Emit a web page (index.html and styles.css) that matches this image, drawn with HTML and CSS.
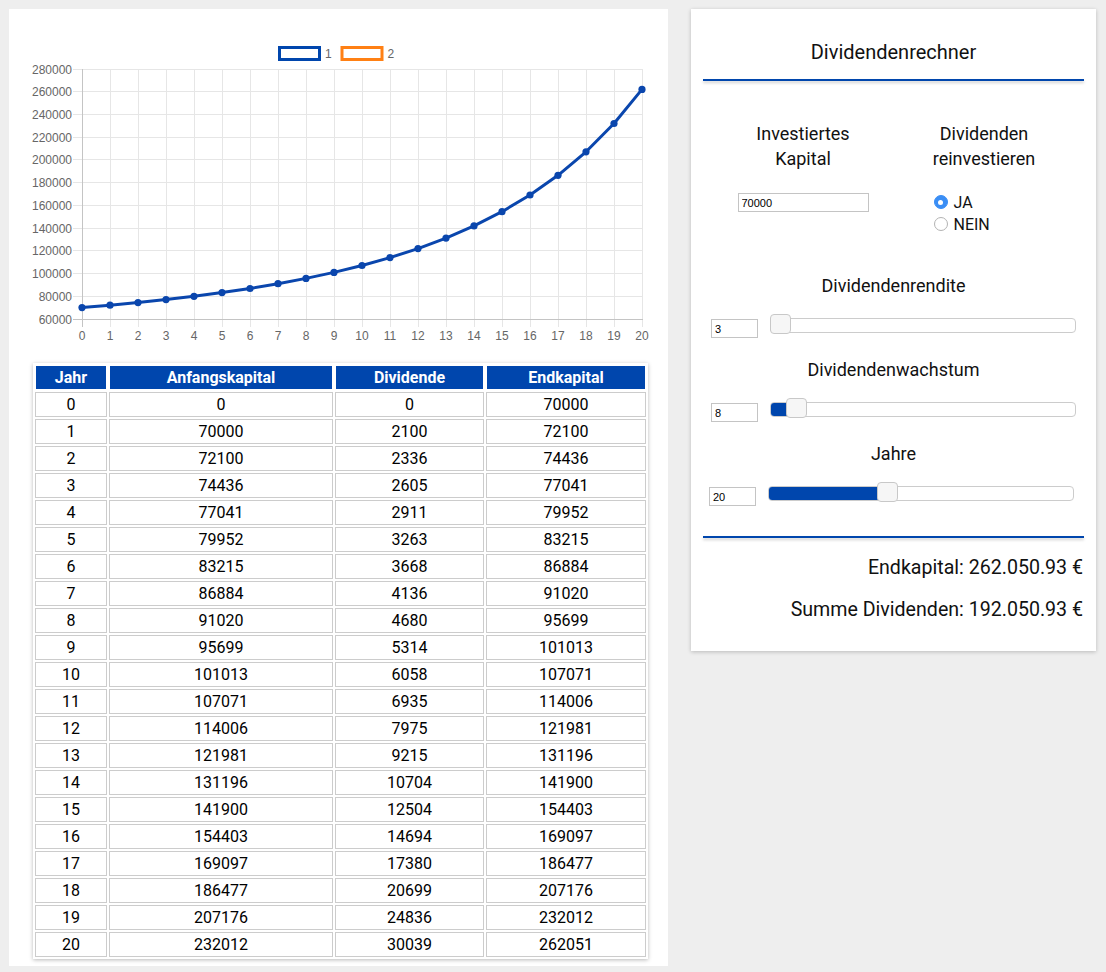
FILE: index.html
```html
<!DOCTYPE html>
<html lang="de">
<head>
<meta charset="utf-8">
<title>Dividendenrechner</title>
<link rel="stylesheet" href="styles.css">
</head>
<body>
<div class="page">
  <section class="card results-card">
    <svg class="chart" width="659" height="354" viewBox="9 9 659 354" xmlns="http://www.w3.org/2000/svg">
      <g class="legend">
        <rect x="279.5" y="47.5" width="40" height="12" fill="#fff" stroke="#0046ad" stroke-width="3"/>
        <text x="325" y="57.5">1</text>
        <rect x="342" y="47.5" width="40" height="12" fill="#fff" stroke="#ff8014" stroke-width="3"/>
        <text x="387.5" y="57.5">2</text>
      </g>
      <g class="grid" stroke="#e6e6e6" stroke-width="1">
        <line x1="73" y1="69.5" x2="643" y2="69.5"/>
        <line x1="73" y1="91.5" x2="643" y2="91.5"/>
        <line x1="73" y1="114.5" x2="643" y2="114.5"/>
        <line x1="73" y1="137.5" x2="643" y2="137.5"/>
        <line x1="73" y1="159.5" x2="643" y2="159.5"/>
        <line x1="73" y1="182.5" x2="643" y2="182.5"/>
        <line x1="73" y1="205.5" x2="643" y2="205.5"/>
        <line x1="73" y1="228.5" x2="643" y2="228.5"/>
        <line x1="73" y1="250.5" x2="643" y2="250.5"/>
        <line x1="73" y1="273.5" x2="643" y2="273.5"/>
        <line x1="73" y1="296.5" x2="643" y2="296.5"/>
        <line x1="110.5" y1="69" x2="110.5" y2="327"/>
        <line x1="138.5" y1="69" x2="138.5" y2="327"/>
        <line x1="166.5" y1="69" x2="166.5" y2="327"/>
        <line x1="194.5" y1="69" x2="194.5" y2="327"/>
        <line x1="222.5" y1="69" x2="222.5" y2="327"/>
        <line x1="250.5" y1="69" x2="250.5" y2="327"/>
        <line x1="278.5" y1="69" x2="278.5" y2="327"/>
        <line x1="306.5" y1="69" x2="306.5" y2="327"/>
        <line x1="334.5" y1="69" x2="334.5" y2="327"/>
        <line x1="362.5" y1="69" x2="362.5" y2="327"/>
        <line x1="390.5" y1="69" x2="390.5" y2="327"/>
        <line x1="418.5" y1="69" x2="418.5" y2="327"/>
        <line x1="446.5" y1="69" x2="446.5" y2="327"/>
        <line x1="474.5" y1="69" x2="474.5" y2="327"/>
        <line x1="502.5" y1="69" x2="502.5" y2="327"/>
        <line x1="530.5" y1="69" x2="530.5" y2="327"/>
        <line x1="558.5" y1="69" x2="558.5" y2="327"/>
        <line x1="586.5" y1="69" x2="586.5" y2="327"/>
        <line x1="614.5" y1="69" x2="614.5" y2="327"/>
        <line x1="642.5" y1="69" x2="642.5" y2="327"/>
      </g>
      <g class="axes" stroke="#c4c4c4" stroke-width="1">
        <line x1="73" y1="319.5" x2="643" y2="319.5"/>
        <line x1="82.5" y1="69" x2="82.5" y2="327"/>
      </g>
      <g class="ylabels" text-anchor="end">
        <text x="72" y="73.5">280000</text>
        <text x="72" y="95.5">260000</text>
        <text x="72" y="118.5">240000</text>
        <text x="72" y="141.5">220000</text>
        <text x="72" y="163.5">200000</text>
        <text x="72" y="186.5">180000</text>
        <text x="72" y="209.5">160000</text>
        <text x="72" y="232.5">140000</text>
        <text x="72" y="254.5">120000</text>
        <text x="72" y="277.5">100000</text>
        <text x="72" y="300.5">80000</text>
        <text x="72" y="323.5">60000</text>
      </g>
      <g class="xlabels" text-anchor="middle">
        <text x="82" y="340">0</text>
        <text x="110" y="340">1</text>
        <text x="138" y="340">2</text>
        <text x="166" y="340">3</text>
        <text x="194" y="340">4</text>
        <text x="222" y="340">5</text>
        <text x="250" y="340">6</text>
        <text x="278" y="340">7</text>
        <text x="306" y="340">8</text>
        <text x="334" y="340">9</text>
        <text x="362" y="340">10</text>
        <text x="390" y="340">11</text>
        <text x="418" y="340">12</text>
        <text x="446" y="340">13</text>
        <text x="474" y="340">14</text>
        <text x="502" y="340">15</text>
        <text x="530" y="340">16</text>
        <text x="558" y="340">17</text>
        <text x="586" y="340">18</text>
        <text x="614" y="340">19</text>
        <text x="642" y="340">20</text>
      </g>
      <polyline class="series" fill="none" stroke="#0a46ad" stroke-width="3" stroke-linejoin="round" stroke-linecap="round"
        points="82,307.6 110,305.2 138,302.6 166,299.6 194,296.3 222,292.6 250,288.5 278,283.7 306,278.4 334,272.4 362,265.5 390,257.6 418,248.6 446,238.1 474,225.9 502,211.7 530,195 558,175.3 586,151.8 614,123.5 642,89.4"/>
      <g class="points" fill="#0a46ad">
        <circle cx="82" cy="307.6" r="3.6"/>
        <circle cx="110" cy="305.2" r="3.6"/>
        <circle cx="138" cy="302.6" r="3.6"/>
        <circle cx="166" cy="299.6" r="3.6"/>
        <circle cx="194" cy="296.3" r="3.6"/>
        <circle cx="222" cy="292.6" r="3.6"/>
        <circle cx="250" cy="288.5" r="3.6"/>
        <circle cx="278" cy="283.7" r="3.6"/>
        <circle cx="306" cy="278.4" r="3.6"/>
        <circle cx="334" cy="272.4" r="3.6"/>
        <circle cx="362" cy="265.5" r="3.6"/>
        <circle cx="390" cy="257.6" r="3.6"/>
        <circle cx="418" cy="248.6" r="3.6"/>
        <circle cx="446" cy="238.1" r="3.6"/>
        <circle cx="474" cy="225.9" r="3.6"/>
        <circle cx="502" cy="211.7" r="3.6"/>
        <circle cx="530" cy="195" r="3.6"/>
        <circle cx="558" cy="175.3" r="3.6"/>
        <circle cx="586" cy="151.8" r="3.6"/>
        <circle cx="614" cy="123.5" r="3.6"/>
        <circle cx="642" cy="89.4" r="3.6"/>
      </g>
    </svg>

    <table class="data-table">
      <thead>
        <tr><th class="c-year">Jahr</th><th class="c-start">Anfangskapital</th><th class="c-div">Dividende</th><th class="c-end">Endkapital</th></tr>
      </thead>
      <tbody>
        <tr><td>0</td><td>0</td><td>0</td><td>70000</td></tr>
        <tr><td>1</td><td>70000</td><td>2100</td><td>72100</td></tr>
        <tr><td>2</td><td>72100</td><td>2336</td><td>74436</td></tr>
        <tr><td>3</td><td>74436</td><td>2605</td><td>77041</td></tr>
        <tr><td>4</td><td>77041</td><td>2911</td><td>79952</td></tr>
        <tr><td>5</td><td>79952</td><td>3263</td><td>83215</td></tr>
        <tr><td>6</td><td>83215</td><td>3668</td><td>86884</td></tr>
        <tr><td>7</td><td>86884</td><td>4136</td><td>91020</td></tr>
        <tr><td>8</td><td>91020</td><td>4680</td><td>95699</td></tr>
        <tr><td>9</td><td>95699</td><td>5314</td><td>101013</td></tr>
        <tr><td>10</td><td>101013</td><td>6058</td><td>107071</td></tr>
        <tr><td>11</td><td>107071</td><td>6935</td><td>114006</td></tr>
        <tr><td>12</td><td>114006</td><td>7975</td><td>121981</td></tr>
        <tr><td>13</td><td>121981</td><td>9215</td><td>131196</td></tr>
        <tr><td>14</td><td>131196</td><td>10704</td><td>141900</td></tr>
        <tr><td>15</td><td>141900</td><td>12504</td><td>154403</td></tr>
        <tr><td>16</td><td>154403</td><td>14694</td><td>169097</td></tr>
        <tr><td>17</td><td>169097</td><td>17380</td><td>186477</td></tr>
        <tr><td>18</td><td>186477</td><td>20699</td><td>207176</td></tr>
        <tr><td>19</td><td>207176</td><td>24836</td><td>232012</td></tr>
        <tr><td>20</td><td>232012</td><td>30039</td><td>262051</td></tr>
      </tbody>
    </table>
  </section>

  <section class="card calc">
    <h2 class="calc-title">Dividendenrechner</h2>
    <div class="rule"></div>

    <div class="options">
      <div class="option">
        <div class="opt-label">Investiertes<br>Kapital</div>
        <input class="num num-wide" type="text" value="70000">
      </div>
      <div class="option">
        <div class="opt-label">Dividenden<br>reinvestieren</div>
        <div class="radios">
          <label class="radio"><input type="radio" name="re" checked><span>JA</span></label>
          <label class="radio"><input type="radio" name="re"><span>NEIN</span></label>
        </div>
      </div>
    </div>

    <div class="slider-group first">
      <div class="field-label">Dividendenrendite</div>
      <div class="slider-row">
        <input class="num" type="text" value="3">
        <div class="track">
          <div class="thumb" style="left:-1px"></div>
        </div>
      </div>
    </div>

    <div class="slider-group">
      <div class="field-label">Dividendenwachstum</div>
      <div class="slider-row">
        <input class="num" type="text" value="8">
        <div class="track">
          <div class="fill" style="width:26px"></div>
          <div class="thumb" style="left:15px"></div>
        </div>
      </div>
    </div>

    <div class="slider-group">
      <div class="field-label">Jahre</div>
      <div class="slider-row shifted">
        <input class="num" type="text" value="20">
        <div class="track">
          <div class="fill" style="width:118px"></div>
          <div class="thumb" style="left:108px"></div>
        </div>
      </div>
    </div>

    <div class="rule rule-bottom"></div>
    <p class="result">Endkapital: 262.050.93 €</p>
    <p class="result">Summe Dividenden: 192.050.93 €</p>
  </section>
</div>
</body>
</html>
```
FILE: styles.css
```css
html, body {
  margin: 0;
  padding: 0;
  background: #eeeeee;
}

body {
  font-family: Roboto, "Liberation Sans", Arial, sans-serif;
  color: #111;
}

.page {
  display: flex;
  align-items: flex-start;
  gap: 23px;
  padding: 9px;
}

.card {
  background: #fff;
  box-sizing: border-box;
}

/* ---------- left card ---------- */
.results-card {
  width: 659px;
  padding: 0 0 7px 0;
}

.chart {
  display: block;
}

.chart text {
  font-family: "Liberation Sans", Arial, sans-serif;
  font-size: 12px;
  fill: #666;
}

.data-table {
  margin-left: 24px;
  width: 615px;
  table-layout: fixed;
  border-collapse: separate;
  border-spacing: 2px;
  box-shadow: 0 1px 4px rgba(0, 0, 0, 0.28);
  font-size: 16px;
}

.data-table th,
.data-table td {
  box-sizing: border-box;
  height: 25px;
  padding: 0;
  text-align: center;
  line-height: 23px;
}

.data-table th {
  background: #0046ad;
  color: #fff;
  font-weight: 700;
  border: 1px solid #fff;
}

.data-table td {
  border: 1px solid #cccccc;
  color: #000;
  padding-top: 1px;
  line-height: 22px;
}

.c-year { width: 72px; }
.c-start { width: 224px; }
.c-div { width: 149px; }
.c-end { width: 160px; }

/* ---------- right card ---------- */
.calc {
  width: 405px;
  padding: 31px 12px 29px;
  box-shadow: 0 1px 4px rgba(0, 0, 0, 0.22);
}

.calc-title {
  margin: 0;
  font-size: 20px;
  line-height: 24px;
  font-weight: 400;
  text-align: center;
  color: #111;
}

.rule {
  height: 2px;
  background: #0046ad;
  box-shadow: 0 2px 3px rgba(0, 0, 0, 0.2);
  margin-top: 15px;
}

.options {
  display: grid;
  grid-template-columns: 181px 181px;
  justify-content: center;
  margin-top: 40px;
}

.option {
  display: flex;
  flex-direction: column;
}

.opt-label,
.field-label {
  font-size: 18px;
  line-height: 25px;
  text-align: center;
  color: #111;
}

.num {
  box-sizing: border-box;
  height: 19px;
  width: 47px;
  margin: 0;
  padding: 0 3px;
  border: 1px solid #c4c4c4;
  font-family: "Liberation Sans", Arial, sans-serif;
  font-size: 11px;
  color: #000;
  background: #fff;
  outline: none;
}

.num-wide {
  width: 131px;
  margin: 22px auto 0;
}

.radios {
  margin-top: 20px;
  padding-left: 40px;
  display: flex;
  flex-direction: column;
}

.radio {
  display: flex;
  align-items: center;
  gap: 6px;
  height: 22px;
  font-size: 16px;
  color: #111;
}

.radio input {
  appearance: none;
  -webkit-appearance: none;
  box-sizing: border-box;
  width: 14px;
  height: 14px;
  margin: 0;
  border-radius: 50%;
  border: 1px solid #b3b3b3;
  background: #fff;
  position: relative;
}

.radio input:checked {
  border-color: #3a8ef5;
  background: #3a8ef5;
}

.radio input:checked::after {
  content: "";
  position: absolute;
  left: 50%;
  top: 50%;
  width: 5px;
  height: 5px;
  margin: -2.5px 0 0 -2.5px;
  border-radius: 50%;
  background: #fff;
}

.slider-group {
  margin-top: 19px;
}

.slider-group.first {
  margin-top: 38px;
}

.slider-row {
  display: flex;
  align-items: flex-start;
  gap: 12px;
  padding: 0 8px;
  margin-top: 21px;
}

.slider-row.shifted {
  margin-left: -2px;
  margin-right: 2px;
}

.track {
  position: relative;
  flex: 1;
  box-sizing: border-box;
  height: 15px;
  margin-top: -1px;
  border: 1px solid #cccccc;
  border-radius: 4px;
  background: #fff;
}

.fill {
  position: absolute;
  left: 0;
  top: 0;
  bottom: 0;
  background: #0046ad;
  border-radius: 3px 0 0 3px;
}

.thumb {
  position: absolute;
  top: -5px;
  box-sizing: border-box;
  width: 21px;
  height: 20px;
  border: 1px solid #c8c8c8;
  border-radius: 4px;
  background: #f6f6f6;
}

.rule-bottom {
  margin-top: 30px;
}

.result {
  margin: 18px 0 0;
  font-size: 19.6px;
  line-height: 24px;
  text-align: right;
  padding-right: 1px;
  color: #111;
}
```
